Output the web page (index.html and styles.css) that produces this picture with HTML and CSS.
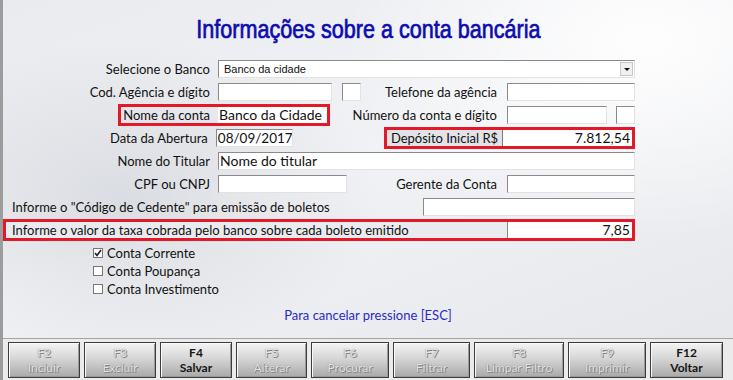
FILE: index.html
```html
<!DOCTYPE html>
<html lang="pt-BR">
<head>
  <meta charset="UTF-8">
  <title>Informações sobre a conta bancária</title>
  <link rel="stylesheet" href="styles.css">
</head>
<body>

<div class="window">
  <h1 class="title"><span>Informações sobre a conta bancária</span></h1>

  <div class="form">
    <div class="row">
      <div class="lbl">Selecione o Banco</div>
      <div class="field select w417">Banco da cidade<span class="arrow"></span></div>
    </div>

    <div class="row">
      <div class="lbl">Cod. Agência e dígito</div>
      <div class="field w114"></div>
      <div class="field w19 ml10"></div>
      <div class="rlbl w136">Telefone da agência</div>
      <div class="field w128"></div>
    </div>

    <div class="row">
      <div class="hl nome-conta">
        <div class="lbl in">Nome da conta</div>
        <div class="field plain big w109">Banco da Cidade</div>
      </div>
      <div class="rlbl w167">Número da conta e dígito</div>
      <div class="field w100"></div>
      <div class="field w19 ml9"></div>
    </div>

    <div class="row">
      <div class="lbl">Data da Abertura</div>
      <div class="field big date w78">08/09/2017</div>
      <div class="hl deposito">
        <div class="tag">Depósito Inicial R$</div>
        <div class="field plain big num w129">7.812,54</div>
      </div>
    </div>

    <div class="row">
      <div class="lbl">Nome do Titular</div>
      <div class="field big w417">Nome do titular</div>
    </div>

    <div class="row">
      <div class="lbl">CPF ou CNPJ</div>
      <div class="field w129"></div>
      <div class="rlbl w150">Gerente da Conta</div>
      <div class="field w128"></div>
    </div>

    <div class="row">
      <div class="wide-lbl">Informe o "Código de Cedente" para emissão de boletos</div>
      <div class="field w212"></div>
    </div>

    <div class="row">
      <div class="hl taxa">
        <div class="wide-lbl tinted">Informe o valor da taxa cobrada pelo banco sobre cada boleto emitido</div>
        <div class="field plain big num w124">7,85</div>
      </div>
    </div>
  </div>

  <div class="checks">
    <div class="check"><span class="box"><svg width="8" height="8" viewBox="0 0 8 8"><path d="M1 4 L3 6.5 L7 1" fill="none" stroke="#222" stroke-width="1.6"/></svg></span>Conta Corrente</div>
    <div class="check"><span class="box"></span>Conta Poupança</div>
    <div class="check"><span class="box"></span>Conta Investimento</div>
  </div>

  <p class="cancel">Para cancelar pressione [ESC]</p>

  <div class="toolbar">
    <div class="btn off w72"><span>F2</span><span>Incluir</span></div>
    <div class="btn off w72"><span>F3</span><span>Excluir</span></div>
    <div class="btn w72"><span>F4</span><span>Salvar</span></div>
    <div class="btn off w71"><span>F5</span><span>Alterar</span></div>
    <div class="btn off w78"><span>F6</span><span>Procurar</span></div>
    <div class="btn off w77"><span>F7</span><span>Filtrar</span></div>
    <div class="btn off w90"><span>F8</span><span>Limpar Filtro</span></div>
    <div class="btn off w78"><span>F9</span><span>Imprimir</span></div>
    <div class="btn w73"><span>F12</span><span>Voltar</span></div>
  </div>
</div>

</body>
</html>
```

FILE: styles.css
```css
body {
  margin: 0;
  font-family: Lato, 'Liberation Sans', sans-serif;
  font-size: 13px;
  color: #111;
}

.window {
  width: 730px;
  height: 380px;
  border-left: 3px solid #9c9c9c;
  background:
    radial-gradient(ellipse 260px 160px at 120px 200px, rgba(200,204,210,0.55), transparent),
    radial-gradient(ellipse 300px 200px at 640px 40px, rgba(255,255,255,0.9), transparent),
    linear-gradient(160deg, #e9ebef 0%, #f1f2f5 45%, #e4e6ea 100%);
  overflow: hidden;
}

.title {
  margin: 0;
  height: 57px;
  box-sizing: border-box;
  padding-top: 14px;
  line-height: 30px;
  text-align: center;
  font-family: 'Liberation Sans', sans-serif;
  font-weight: normal;
  font-size: 26px;
  color: #0c0cb0;
  -webkit-text-stroke: 0.7px #0c0cb0;
}

.title span {
  display: inline-block;
  transform: scaleX(0.83);
}

.form {
  width: 632px;
}

.row {
  display: flex;
  align-items: center;
  height: 23px;
}

.lbl {
  width: 207px;
  margin-right: 8px;
  text-align: right;
  white-space: nowrap;
}

.lbl.in {
  width: 89px;
}

.rlbl {
  text-align: right;
  margin-right: 10px;
  white-space: nowrap;
}

.wide-lbl {
  flex: 1;
  padding-left: 9px;
  white-space: nowrap;
}

.field {
  box-sizing: border-box;
  height: 18px;
  background: #fff;
  border: 1px solid;
  border-color: #8a8a8a #e2e2e2 #e2e2e2 #8a8a8a;
  padding: 0 3px;
  line-height: 16px;
  white-space: nowrap;
  overflow: hidden;
}

.field.plain {
  border: none;
  height: 16px;
}

.field.big {
  font-size: 14px;
  padding-left: 1px;
}

.field.date {
  font-size: 13.5px;
  padding-right: 0;
}

.field.num {
  text-align: right;
  padding-right: 2px;
}

.select {
  position: relative;
  font-family: 'Liberation Sans', sans-serif;
  font-size: 11px;
  padding-left: 5px;
}

.select .arrow {
  position: absolute;
  right: 1px;
  top: 1px;
  width: 13px;
  height: 14px;
  box-sizing: border-box;
  background: #f0f0f0;
  border: 1px solid #c8c8c8;
}

.select .arrow::after {
  content: '';
  position: absolute;
  left: 3px;
  top: 5px;
  border-left: 3px solid transparent;
  border-right: 3px solid transparent;
  border-top: 3px solid #111;
}

.hl {
  display: flex;
  align-items: center;
  box-sizing: border-box;
  height: 22px;
  border: 3px solid #e3192a;
}

.nome-conta {
  margin-left: 115px;
  width: 212px;
}

.deposito {
  margin-left: 91px;
  width: 251px;
}

.taxa {
  width: 635px;
}

.taxa .wide-lbl {
  padding-left: 6px;
}

.tag {
  width: 116px;
  height: 16px;
  line-height: 16px;
  box-sizing: border-box;
  text-align: center;
  background: #e2e3e6;
  border-right: 1px solid #7a7a7a;
}

.tinted {
  height: 16px;
  line-height: 16px;
  background: #eaebee;
  border-right: 1px solid #8a8a8a;
}

.w19 { width: 19px; }
.w78 { width: 78px; }
.w100 { width: 100px; }
.w109 { width: 109px; }
.w114 { width: 114px; }
.w124 { width: 124px; }
.w128 { width: 128px; }
.w129 { width: 129px; }
.w136 { width: 136px; }
.w150 { width: 150px; }
.w167 { width: 167px; }
.w212 { width: 212px; }
.w417 { width: 417px; }
.ml9 { margin-left: 9px; }
.ml10 { margin-left: 10px; }

.checks {
  margin-top: 3px;
  padding-left: 90px;
}

.check {
  display: flex;
  align-items: center;
  height: 18px;
}

.box {
  display: inline-flex;
  align-items: center;
  justify-content: center;
  box-sizing: border-box;
  width: 10px;
  height: 10px;
  margin-right: 4px;
  background: #fff;
  border: 1px solid #777;
}

.cancel {
  margin: 8px 0 0;
  height: 18px;
  line-height: 18px;
  text-align: center;
  color: #2a2ac8;
  font-size: 13px;
}

.toolbar {
  margin-top: 14px;
  display: flex;
  gap: 4px;
  padding: 3px 0 0 5px;
  height: 42px;
  box-sizing: border-box;
  border-top: 1px solid #a4a4a4;
  background: #ebebeb;
}

.btn {
  box-sizing: border-box;
  height: 36px;
  display: flex;
  flex-direction: column;
  align-items: center;
  justify-content: center;
  border: 1px solid #3c3c3c;
  box-shadow: inset 1px 1px 0 #fafafa, inset -1px -1px 0 #9a9a9a;
  background: linear-gradient(#f4f4f4, #d6d6d6 45%, #a9a9a9);
  font-size: 12px;
  line-height: 15px;
  font-weight: bold;
  color: #151515;
}

.btn.off {
  font-weight: normal;
  color: #e6e6e6;
  text-shadow: 0 0 1px #6c6c6c, 1px 1px 0 #8a8a8a;
}

.w71 { width: 71px; }
.w72 { width: 72px; }
.w73 { width: 73px; }
.w77 { width: 77px; }
.w90 { width: 90px; }
```
